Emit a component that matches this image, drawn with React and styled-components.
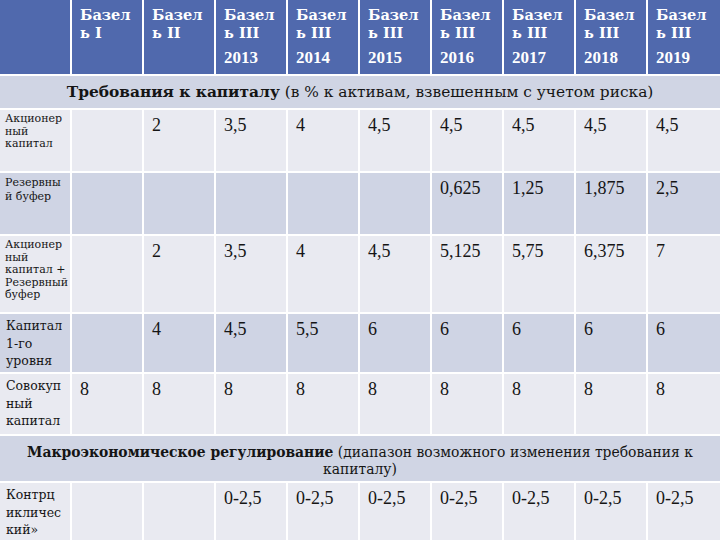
import React from 'react';
import styled, { createGlobalStyle } from 'styled-components';

const GlobalStyle = createGlobalStyle`
  html, body {
    margin: 0;
    padding: 0;
    background: #ffffff;
    font-family: "DejaVu Serif", "Liberation Serif", serif;
    color: #151515;
  }
`;

const years = ['I', 'II', 'III 2013', 'III 2014', 'III 2015', 'III 2016', 'III 2017', 'III 2018', 'III 2019'];

// one row of figures per line of the table, an empty string leaves the cell blank
const rows = [
  { label: ['Акционер', 'ный', 'капитал'], small: true, shade: 'light',
    values: ['', '2', '3,5', '4', '4,5', '4,5', '4,5', '4,5', '4,5'] },
  { label: ['Резервны', 'й буфер'], small: true, lh: 14, shade: 'dark',
    values: ['', '', '', '', '', '0,625', '1,25', '1,875', '2,5'] },
  { label: ['Акционер', 'ный', 'капитал +', 'Резервный', 'буфер'], small: true, shade: 'light',
    values: ['', '2', '3,5', '4', '4,5', '5,125', '5,75', '6,375', '7'] },
  { label: ['Капитал', '1-го', 'уровня'], shade: 'dark',
    values: ['', '4', '4,5', '5,5', '6', '6', '6', '6', '6'] },
  { label: ['Совокуп', 'ный', 'капитал'], shade: 'light',
    values: ['8', '8', '8', '8', '8', '8', '8', '8', '8'] },
];

const counter = { label: ['Контрц', 'икличес', 'кий»'], shade: 'light',
  values: ['', '', '0-2,5', '0-2,5', '0-2,5', '0-2,5', '0-2,5', '0-2,5', '0-2,5'] };

const shades = { light: '#e9eaf1', dark: '#cfd4e4' };

const Table = styled.div`
  display: grid;
  grid-template-columns: repeat(9, 70px) 1fr;
  grid-template-rows: 74px 32px 61px 61px 76px 58px 60px 45px 60px;
  gap: 2px;
  width: 720px;
  height: 540px;
  overflow: hidden;
  background: #ffffff;
`;

const HeadCell = styled.div`
  background: #5069ad;
  color: #ffffff;
  font-weight: bold;
  font-size: 14.5px;
  line-height: 18px;
  padding: 6px 0 0 8px;
  overflow: hidden;
  white-space: nowrap;
`;

const HeadYear = styled.div`
  font-family: "Liberation Serif", serif;
  font-size: 17px;
  margin-top: 7px;
`;

const Section = styled.div`
  grid-column: 1 / -1;
  background: #d0d5e4;
  font-size: ${(p) => (p.$tall ? '13.9px' : '15.4px')};
  line-height: 17px;
  text-align: center;
  display: flex;
  flex-direction: column;
  justify-content: center;
  padding-top: ${(p) => (p.$tall ? '4px' : '0')};
  white-space: nowrap;
  b { font-weight: bold; }
`;

const Label = styled.div`
  background: ${(p) => shades[p.$shade]};
  font-size: ${(p) => (p.$small ? '11px' : '12.5px')};
  line-height: ${(p) => p.$lh || (p.$small ? 12.5 : 17.5)}px;
  padding: ${(p) => (p.$small ? '3px 0 0 5px' : '3px 0 0 6px')};
  overflow: hidden;
  white-space: nowrap;
`;

const Value = styled.div`
  background: ${(p) => shades[p.$shade]};
  font-family: "Liberation Serif", serif;
  font-size: 18px;
  line-height: 22px;
  padding: 4px 0 0 8px;
  white-space: nowrap;
`;

function Row({ row }) {
  return (
    <>
      <Label $shade={row.shade} $small={row.small} $lh={row.lh}>
        {row.label.map((l) => <div key={l}>{l}</div>)}
      </Label>
      {row.values.map((v, i) => (
        <Value key={i} $shade={row.shade}>{v}</Value>
      ))}
    </>
  );
}

export default function App() {
  return (
    <>
      <GlobalStyle />
      <Table>
        <HeadCell />
        {years.map((y) => {
          const [num, year] = y.split(' ');
          return (
            <HeadCell key={y}>
              <div>Базел</div>
              <div>ь {num}</div>
              {year && <HeadYear>{year}</HeadYear>}
            </HeadCell>
          );
        })}
        <Section>
          <div><b>Требования к капиталу</b> (в % к активам, взвешенным с учетом риска)</div>
        </Section>
        {rows.map((r, i) => <Row key={i} row={r} />)}
        <Section $tall>
          <div><b>Макроэкономическое регулирование</b> (диапазон возможного изменения требования к</div>
          <div>капиталу)</div>
        </Section>
        <Row row={counter} />
      </Table>
    </>
  );
}
